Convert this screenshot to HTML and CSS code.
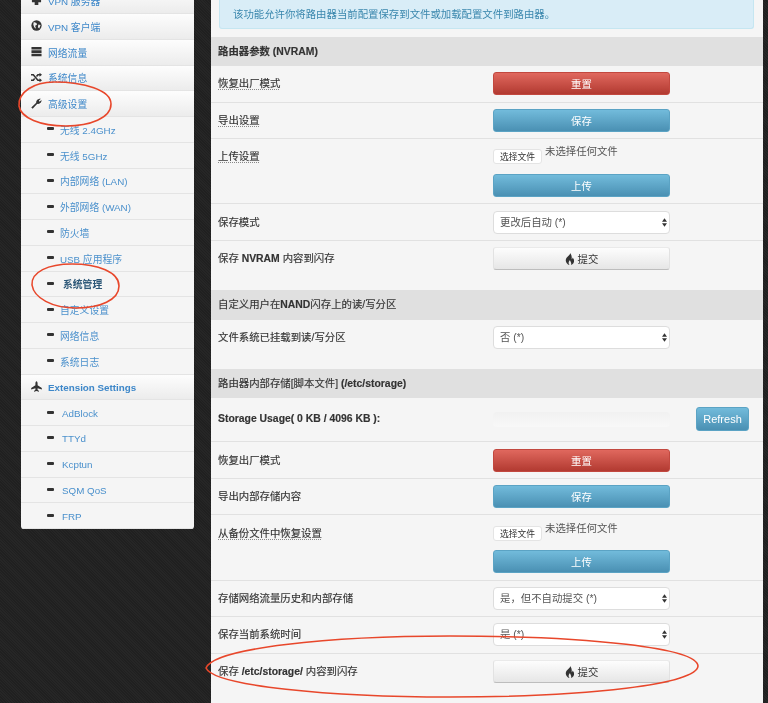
FILE: index.html
```html
<!DOCTYPE html>
<html lang="zh-CN">
<head>
  <meta charset="UTF-8">
  <title>高级设置 - 系统管理</title>
  <link rel="stylesheet" href="styles.css">
</head>
<body>
  <div class="layout">
    <ul class="sidebar">
      <li class="nav-head"><svg class="nav-icon" viewBox="0 0 12 12"><path d="M1 1h10v7H8v3H4V8H1z" fill="#333"/></svg><a>VPN 服务器</a></li>
      <li class="nav-head"><svg class="nav-icon" viewBox="0 0 12 12"><circle cx="6" cy="6" r="5.6" fill="#333"/><path d="M3 2.200l3 1 .5 2-2 1 1 3.300-2-1.500-1-3zM8 5l2.500.5L9 9.300 7.500 8z" fill="#eee"/></svg><a>VPN 客户端</a></li>
      <li class="nav-head"><svg class="nav-icon" viewBox="0 0 12 12"><path d="M.5 1h11v2.900H.5zM.5 4.700h11v2.900H.5zM.5 8.400h11v2.900H.5z" fill="#333"/></svg><a>网络流量</a></li>
      <li class="nav-head"><svg class="nav-icon" viewBox="0 0 12 12"><path d="M0 3h2.500l5 6H10M0 9h2.500l1.500-1.800M6 4.800L7.500 3H10" fill="none" stroke="#333" stroke-width="1.700"/><path d="M9.300.8L12 3 9.300 5.200zM9.300 6.800L12 9l-2.700 2.200z" fill="#333"/></svg><a>系统信息</a></li>
      <li class="nav-head"><svg class="nav-icon" viewBox="0 0 12 12"><path d="M1.800 11.800L.3 10.300 5.700 5.200C5.300 3 7.500.3 10.800.8L8.600 2.700 9.300 4.100 11.500 2.300C11.800 5 9.200 7.300 6.900 6.400z" fill="#333"/></svg><a>高级设置</a></li>
      <li class="nav-sub"><i class="minus"></i><a>无线 2.4GHz</a></li>
      <li class="nav-sub"><i class="minus"></i><a>无线 5GHz</a></li>
      <li class="nav-sub"><i class="minus"></i><a>内部网络 (LAN)</a></li>
      <li class="nav-sub"><i class="minus"></i><a>外部网络 (WAN)</a></li>
      <li class="nav-sub"><i class="minus"></i><a>防火墙</a></li>
      <li class="nav-sub"><i class="minus"></i><a>USB 应用程序</a></li>
      <li class="nav-sub active"><i class="minus"></i><a>系统管理</a></li>
      <li class="nav-sub"><i class="minus"></i><a>自定义设置</a></li>
      <li class="nav-sub"><i class="minus"></i><a>网络信息</a></li>
      <li class="nav-sub"><i class="minus"></i><a>系统日志</a></li>
      <li class="nav-head"><svg class="nav-icon" viewBox="0 0 12 12"><path d="M6 .3C6.700.3 7.200 1.500 7.200 3v1.500L11.800 7.500V9.300L7.200 7.800V9.500L8.700 11v.8L6 11l-2.700.8V11L4.800 9.500V7.800L.2 9.300V7.500L4.800 4.500V3C4.800 1.500 5.300.3 6 .3z" fill="#333"/></svg><a class="nav-ext">Extension Settings</a></li>
      <li class="nav-sub ext"><i class="minus"></i><a>AdBlock</a></li>
      <li class="nav-sub ext"><i class="minus"></i><a>TTYd</a></li>
      <li class="nav-sub ext"><i class="minus"></i><a>Kcptun</a></li>
      <li class="nav-sub ext"><i class="minus"></i><a>SQM QoS</a></li>
      <li class="nav-sub ext"><i class="minus"></i><a>FRP</a></li>
    </ul>

    <div class="panel">
      <div class="notice">该功能允许你将路由器当前配置保存到文件或加载配置文件到路由器。</div>

      <div class="section-title"><b>路由器参数 (NVRAM)</b></div>
      <div class="row"><span class="label"><u>恢复出厂模式</u></span><div class="control"><button class="btn btn-red">重置</button></div></div>
      <div class="row"><span class="label"><u>导出设置</u></span><div class="control"><button class="btn btn-blue">保存</button></div></div>
      <div class="row"><span class="label"><u>上传设置</u></span><div class="control">
        <div class="file-line"><button class="file-btn">选择文件</button><span class="file-name">未选择任何文件</span></div>
        <button class="btn btn-blue">上传</button>
      </div></div>
      <div class="row"><span class="label">保存模式</span><div class="control select-wrap"><select><option>更改后自动 (*)</option></select><svg class="arrows" viewBox="0 0 6 10"><path d="M3 0l3 4H0zM3 10L0 6h6z"/></svg></div></div>
      <div class="row row-last"><span class="label">保存 <b>NVRAM</b> 内容到闪存</span><div class="control"><button class="btn btn-plain"><svg class="fire" viewBox="0 0 10 12"><path d="M5 0c.6 2-3 3.500-4 6-.9 2.500 1 5.500 3.500 6C3 10.500 3.500 8.500 5 7c0 1.500 2 2.500 1 5 2-.5 3.500-2.500 3-5C8.700 5.500 8 5 7.500 4.500c0 1-.3 1.500-.8 1.800C7 4 6.500 1.500 5 0z"/></svg> 提交</button></div></div>

      <div class="section-title">自定义用户在<b>NAND</b>闪存上的读/写分区</div>
      <div class="row row-last"><span class="label">文件系统已挂载到读/写分区</span><div class="control select-wrap"><select><option>否 (*)</option></select><svg class="arrows" viewBox="0 0 6 10"><path d="M3 0l3 4H0zM3 10L0 6h6z"/></svg></div></div>

      <div class="section-title">路由器内部存储[脚本文件] <b>(/etc/storage)</b></div>
      <div class="row row-usage"><span class="label"><b>Storage Usage( 0 KB / 4096 KB ):</b></span><div class="control"><div class="progress"></div></div><button class="btn btn-blue btn-refresh">Refresh</button></div>
      <div class="row"><span class="label">恢复出厂模式</span><div class="control"><button class="btn btn-red">重置</button></div></div>
      <div class="row"><span class="label">导出内部存储内容</span><div class="control"><button class="btn btn-blue">保存</button></div></div>
      <div class="row"><span class="label"><u>从备份文件中恢复设置</u></span><div class="control">
        <div class="file-line"><button class="file-btn">选择文件</button><span class="file-name">未选择任何文件</span></div>
        <button class="btn btn-blue">上传</button>
      </div></div>
      <div class="row"><span class="label">存储网络流量历史和内部存储</span><div class="control select-wrap"><select><option>是，但不自动提交 (*)</option></select><svg class="arrows" viewBox="0 0 6 10"><path d="M3 0l3 4H0zM3 10L0 6h6z"/></svg></div></div>
      <div class="row"><span class="label">保存当前系统时间</span><div class="control select-wrap"><select><option>是 (*)</option></select><svg class="arrows" viewBox="0 0 6 10"><path d="M3 0l3 4H0zM3 10L0 6h6z"/></svg></div></div>
      <div class="row row-last"><span class="label">保存 <b>/etc/storage/</b> 内容到闪存</span><div class="control"><button class="btn btn-plain"><svg class="fire" viewBox="0 0 10 12"><path d="M5 0c.6 2-3 3.500-4 6-.9 2.500 1 5.500 3.500 6C3 10.500 3.500 8.500 5 7c0 1.500 2 2.500 1 5 2-.5 3.500-2.500 3-5C8.700 5.500 8 5 7.500 4.500c0 1-.3 1.500-.8 1.800C7 4 6.500 1.500 5 0z"/></svg> 提交</button></div></div>
    </div>
  </div>

  <!-- hand drawn red circles on top of the page -->
  <svg class="marks" viewBox="0 0 768 703">
    <path d="M19 106C18 92 34 82 54 82C84 82 111 90 111 104C111 118 90 126 66 126C40 126 21 118 19 106Z"/>
    <path d="M32 285C31 272 48 264 72 264C98 264 119 272 119 286C119 300 100 308 76 308C52 308 34 298 32 285Z"/>
    <path d="M206 668C214 648 330 636 450 636C590 636 697 648 698 666C697 684 590 697 450 697C330 697 214 686 206 668Z"/>
  </svg>
</body>
</html>
```

FILE: styles.css
```css
html, body {
  margin: 0;
  height: 703px;
  overflow: hidden;
}
body {
  position: relative;
  background: #232323 repeating-linear-gradient(45deg, #202020 0 1px, #262626 1px 2px);
  font-family: "Liberation Sans", "Noto Sans CJK SC", sans-serif;
  font-size: 10.4px;
  color: #333;
}
.layout {
  display: flex;
  align-items: flex-start;
  gap: 17px;
  padding: 0 5px 0 21px;
  filter: blur(0.4px);
}

/* left menu */
.sidebar {
  flex: 0 0 173px;
  margin: -11.75px 0 0;
  padding: 0;
  list-style: none;
  background: #f5f5f5;
  border-radius: 0 0 3px 3px;
  overflow: hidden;
}
.sidebar li {
  display: flex;
  align-items: center;
  box-sizing: border-box;
  height: 25.75px;
  padding-top: 1px;
  border-bottom: 1px solid #e4e4e4;
}
.sidebar a {
  color: #4a90cc;
  font-size: 9.8px;
}
.nav-head {
  padding-left: 9.5px;
  background: linear-gradient(#fdfdfd, #ececec);
}
.nav-head a {
  color: #3d87c9;
}
.nav-ext {
  font-weight: bold;
}
.nav-icon {
  width: 11px;
  height: 11px;
  margin: -2px 6.500px 0 0;
}
.nav-sub {
  padding-left: 26px;
}
.minus {
  width: 7px;
  height: 3px;
  margin: -2px 6px 0 0;
  background: #333;
  border-radius: 1px;
}
.nav-sub.ext .minus {
  margin-right: 8px;
}
.nav-sub.active a {
  margin-left: 3px;
  color: #2c5777;
  font-weight: bold;
}

/* right panel */
.panel {
  flex: 0 0 552px;
  height: 703px;
  background: #f5f5f5;
}
.notice {
  box-sizing: border-box;
  height: 29px;
  margin: 0 9px 7.500px 8px;
  padding: 0 13px;
  line-height: 29px;
  background: #d9edf7;
  border: 1px solid #c5e6f1;
  border-top: 0;
  border-radius: 0 0 3px 3px;
  color: #3a87ad;
}
.section-title {
  height: 29.500px;
  padding-left: 7px;
  line-height: 29px;
  background: #e0e0e0;
  -webkit-text-stroke: 0.15px #333;
}
.row {
  display: grid;
  grid-template-columns: 275px 177px 1fr;
  box-sizing: border-box;
  padding: 6.250px 7px;
  border-bottom: 1px solid #e1e1e1;
}
.row-last {
  padding-bottom: 20px;
  border-bottom: 0;
}
.row-usage {
  padding-top: 9px;
  padding-bottom: 10px;
}
.label {
  line-height: 23px;
  -webkit-text-stroke: 0.15px #333;
}
.label u {
  text-decoration: underline dotted #888;
  text-underline-offset: 2px;
}

/* controls */
.control {
  position: relative;
}
.btn {
  display: block;
  box-sizing: border-box;
  width: 100%;
  height: 23px;
  padding: 0;
  border: 1px solid transparent;
  border-radius: 3px;
  font-family: inherit;
  font-size: 10.4px;
  color: #fff;
}
.btn-red {
  background: linear-gradient(#e0685e, #b23a31);
  border-color: #c2483f;
}
.btn-blue {
  background: linear-gradient(#72bbdb, #4a90b3);
  border-color: #5ba3c4;
}
.btn-plain {
  background: linear-gradient(#fdfdfd, #e6e6e6);
  border-color: #eaeaea #e2e2e2 #bdbdbd;
  color: #333;
}
.btn-refresh {
  width: 53px;
  height: 24px;
  margin: 0 0 0 26px;
  font-size: 11px;
}
.fire {
  width: 10px;
  height: 12px;
  vertical-align: -2px;
  fill: #333;
}
.file-line {
  display: flex;
  align-items: flex-start;
  height: 28.750px;
}
.file-btn {
  box-sizing: border-box;
  width: 49px;
  height: 15px;
  margin-top: 4px;
  padding: 0;
  background: #fff;
  border: 1px solid #e4e4e4;
  border-radius: 3px;
  font-family: inherit;
  font-size: 8.800px;
  color: #333;
}
.file-name {
  margin-left: 3px;
  line-height: 14px;
  color: #555;
}
.select-wrap select {
  display: block;
  box-sizing: border-box;
  width: 100%;
  height: 23px;
  padding: 0 0 0 6px;
  appearance: none;
  background: #fff;
  border: 1px solid #ddd;
  border-radius: 4px;
  font-family: inherit;
  font-size: 10.4px;
  color: #555;
}
.arrows {
  position: absolute;
  top: 7px;
  right: 3px;
  width: 5px;
  height: 9px;
  fill: #333;
}
.progress {
  box-sizing: border-box;
  height: 15px;
  margin-top: 5px;
  background: linear-gradient(#f1f1f1, #f8f8f8);
  border-radius: 4px;
}

/* red annotations */
.marks {
  position: absolute;
  top: 0;
  left: 0;
  width: 768px;
  height: 703px;
  fill: none;
  stroke: #e8472b;
  stroke-width: 1.600;
  pointer-events: none;
}
```
